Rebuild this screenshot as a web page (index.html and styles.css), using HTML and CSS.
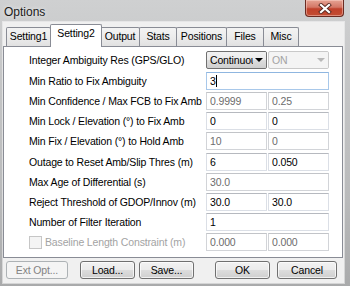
FILE: index.html
```html
<!DOCTYPE html>
<html>
<head>
<meta charset="utf-8">
<link rel="stylesheet" href="styles.css">
</head>
<body>
<div class="window">
  <div class="titlebar">
    <span class="title">Options</span>
    <div class="close">
      <svg width="14" height="11" viewBox="0 0 14 11">
        <path d="M3 2 L11 9 M11 2 L3 9" stroke="#5a2a22" stroke-width="4" stroke-linecap="square" fill="none"/>
        <path d="M3 2 L11 9 M11 2 L3 9" stroke="#ffffff" stroke-width="2.2" stroke-linecap="square" fill="none"/>
      </svg>
    </div>
  </div>
  <div class="client">
    <div class="tabs">
      <div class="tab w-s1">Setting1</div>
      <div class="tab active w-s2">Setting2</div>
      <div class="tab w-out">Output</div>
      <div class="tab w-stats">Stats</div>
      <div class="tab w-pos">Positions</div>
      <div class="tab w-files">Files</div>
      <div class="tab w-misc">Misc</div>
    </div>
    <div class="panel">
      <div class="row first">
        <span class="label">Integer Ambiguity Res (GPS/GLO)</span>
        <div class="combo">Continuou<span class="arrow"></span></div>
        <div class="combo disabled">ON<span class="arrow"></span></div>
      </div>
      <div class="row">
        <span class="label">Min Ratio to Fix Ambiguity</span>
        <div class="edit wide focus">3<span class="caret"></span></div>
      </div>
      <div class="row">
        <span class="label">Min Confidence / Max FCB to Fix Amb</span>
        <div class="edit disabled">0.9999</div>
        <div class="edit disabled">0.25</div>
      </div>
      <div class="row">
        <span class="label">Min Lock / Elevation (°) to Fix Amb</span>
        <div class="edit">0</div>
        <div class="edit">0</div>
      </div>
      <div class="row">
        <span class="label">Min Fix / Elevation (°) to Hold Amb</span>
        <div class="edit disabled">10</div>
        <div class="edit disabled">0</div>
      </div>
      <div class="row spaced">
        <span class="label">Outage to Reset Amb/Slip Thres (m)</span>
        <div class="edit">6</div>
        <div class="edit">0.050</div>
      </div>
      <div class="row">
        <span class="label">Max Age of Differential (s)</span>
        <div class="edit wide disabled">30.0</div>
      </div>
      <div class="row">
        <span class="label">Reject Threshold of GDOP/Innov (m)</span>
        <div class="edit">30.0</div>
        <div class="edit">30.0</div>
      </div>
      <div class="row">
        <span class="label">Number of Filter Iteration</span>
        <div class="edit wide">1</div>
      </div>
      <div class="row">
        <span class="label check-label"><span class="checkbox"></span>Baseline Length Constraint (m)</span>
        <div class="edit disabled">0.000</div>
        <div class="edit disabled">0.000</div>
      </div>
    </div>
    <div class="buttons">
      <div class="btn disabled b-ext">Ext Opt...</div>
      <div class="btn b-load">Load...</div>
      <div class="btn b-save">Save...</div>
      <div class="btn b-ok">OK</div>
      <div class="btn b-cancel">Cancel</div>
    </div>
  </div>
</div>
</body>
</html>
```

FILE: styles.css
```css
html, body {
  margin: 0;
  padding: 0;
}
body {
  width: 350px;
  height: 286px;
  overflow: hidden;
  font-family: "Liberation Sans", Arial, sans-serif;
  font-size: 10.5px;
  letter-spacing: -0.15px;
  color: #000;
}
.window {
  width: 350px;
  height: 286px;
  display: flex;
  flex-direction: column;
  background: linear-gradient(180deg, #cfd0d1 0%, #c4c5c6 30%, #b9babb 70%, #a9aaab 100%);
}
.titlebar {
  height: 22px;
  flex: none;
  display: flex;
  justify-content: space-between;
  align-items: flex-start;
}
.title {
  font-size: 12px;
  letter-spacing: 0;
  line-height: 14px;
  margin: 5px 0 0 4px;
  color: #1a1a1a;
  text-shadow: 0 0 4px rgba(255,255,255,0.8);
}
.close {
  width: 39px;
  height: 17px;
  margin-right: 6px;
  box-sizing: border-box;
  border: 1px solid #6b2b22;
  border-top: none;
  border-radius: 0 0 4px 4px;
  background: linear-gradient(180deg, #e6a393 0%, #d47766 45%, #c0412b 55%, #c24d33 100%);
  box-shadow: inset 0 0 0 1px rgba(255,220,210,0.45);
  display: flex;
  align-items: center;
  justify-content: center;
}
.client {
  margin: 0 6px 0 3px;
  height: 261px;
  flex: none;
  background: #f0f0f0;
  display: flex;
  flex-direction: column;
  box-shadow: 0 0 0 1px rgba(255,255,255,0.5);
}
.tabs {
  height: 24px;
  flex: none;
  display: flex;
  align-items: flex-end;
  padding-left: 3px;
}
.tab {
  height: 19px;
  box-sizing: border-box;
  border: 1px solid #898c95;
  border-bottom: none;
  background: linear-gradient(180deg, #f3f3f3 0%, #ececec 50%, #e1e1e1 100%);
  text-align: center;
  line-height: 17px;
  margin-left: -1px;
  border-radius: 2px 2px 0 0;
}
.tab.active {
  height: 23px;
  margin-bottom: -1px;
  margin-left: -1px;
  margin-right: -1px;
  background: #ffffff;
  line-height: 15px;
  padding-top: 1px;
  position: relative;
  z-index: 1;
}
.w-s1 { width: 45px; margin-left: 0; }
.w-s2 { width: 52px; }
.w-out { width: 40px; }
.w-stats { width: 38px; }
.w-pos { width: 51px; }
.w-files { width: 38px; }
.w-misc { width: 36px; }
.panel {
  height: 212px;
  flex: none;
  box-sizing: border-box;
  margin-right: 1px;
  border: 1px solid #898c95;
  background: #ffffff;
  padding: 4px 0 0 25px;
}
.row {
  display: flex;
  align-items: center;
  height: 18px;
  margin-bottom: 2px;
}
.row.first {
  margin-bottom: 3px;
}
.row.spaced {
  margin-top: 3px;
}
.label {
  width: 177px;
  flex: none;
  white-space: nowrap;
}
.check-label {
  display: flex;
  align-items: center;
  color: #a3a3a3;
}
.checkbox {
  width: 11px;
  height: 11px;
  border: 1px solid #c6c6c6;
  background: #f4f4f4;
  margin-right: 3px;
  flex: none;
}
.edit {
  width: 61px;
  height: 18px;
  box-sizing: border-box;
  border: 1px solid #dbdfe6;
  border-top-color: #b6b9bf;
  background: #fff;
  padding-left: 3px;
  line-height: 16px;
  margin-right: 1px;
  flex: none;
  position: relative;
}
.edit.wide {
  width: 123px;
}
.edit.disabled {
  color: #6d6d6d;
  border-color: #d2d4d8;
  border-top-color: #c2c4c8;
}
.edit.focus {
  border-color: #a8c8ea;
  border-top-color: #8fb6e0;
}
.caret {
  display: inline-block;
  width: 1px;
  height: 12px;
  background: #000;
  vertical-align: -2px;
}
.combo {
  width: 61px;
  height: 18px;
  box-sizing: border-box;
  border: 1px solid #707070;
  border-radius: 2px;
  background: linear-gradient(180deg, #f2f2f2 0%, #ebebeb 50%, #dddddd 50%, #cfcfcf 100%);
  padding-left: 3px;
  line-height: 16px;
  margin-right: 1px;
  flex: none;
  position: relative;
  overflow: hidden;
  white-space: nowrap;
}
.combo .arrow {
  position: absolute;
  right: 3px;
  top: 6px;
  width: 0;
  height: 0;
  border-left: 4px solid transparent;
  border-right: 4px solid transparent;
  border-top: 4px solid #000;
  z-index: 1;
}
.combo::before {
  content: "";
  position: absolute;
  right: 0;
  top: 0;
  bottom: 0;
  width: 13px;
  background: linear-gradient(180deg, #f2f2f2 0%, #ebebeb 50%, #dddddd 50%, #cfcfcf 100%);
}
.combo.disabled {
  border-color: #c9c9c9;
  background: #f4f4f4;
  color: #a3a3a3;
}
.combo.disabled::before {
  background: #f4f4f4;
}
.combo.disabled .arrow {
  border-top-color: #b8b8b8;
}
.buttons {
  display: flex;
  padding: 3px 0 0 3px;
}
.btn {
  height: 18px;
  box-sizing: border-box;
  border: 1px solid #707070;
  border-radius: 3px;
  background: linear-gradient(180deg, #f2f2f2 0%, #ebebeb 50%, #dddddd 50%, #cfcfcf 100%);
  box-shadow: inset 0 0 0 1px rgba(255,255,255,0.7);
  text-align: center;
  line-height: 16px;
  flex: none;
}
.btn.disabled {
  border-color: #adb2b5;
  background: #f4f4f4;
  color: #838383;
  box-shadow: none;
}
.b-ext { width: 62px; }
.b-load { width: 55px; margin-left: 12px; }
.b-save { width: 55px; margin-left: 4px; }
.b-ok { width: 55px; margin-left: 21px; }
.b-cancel { width: 60px; margin-left: 7px; }
```
